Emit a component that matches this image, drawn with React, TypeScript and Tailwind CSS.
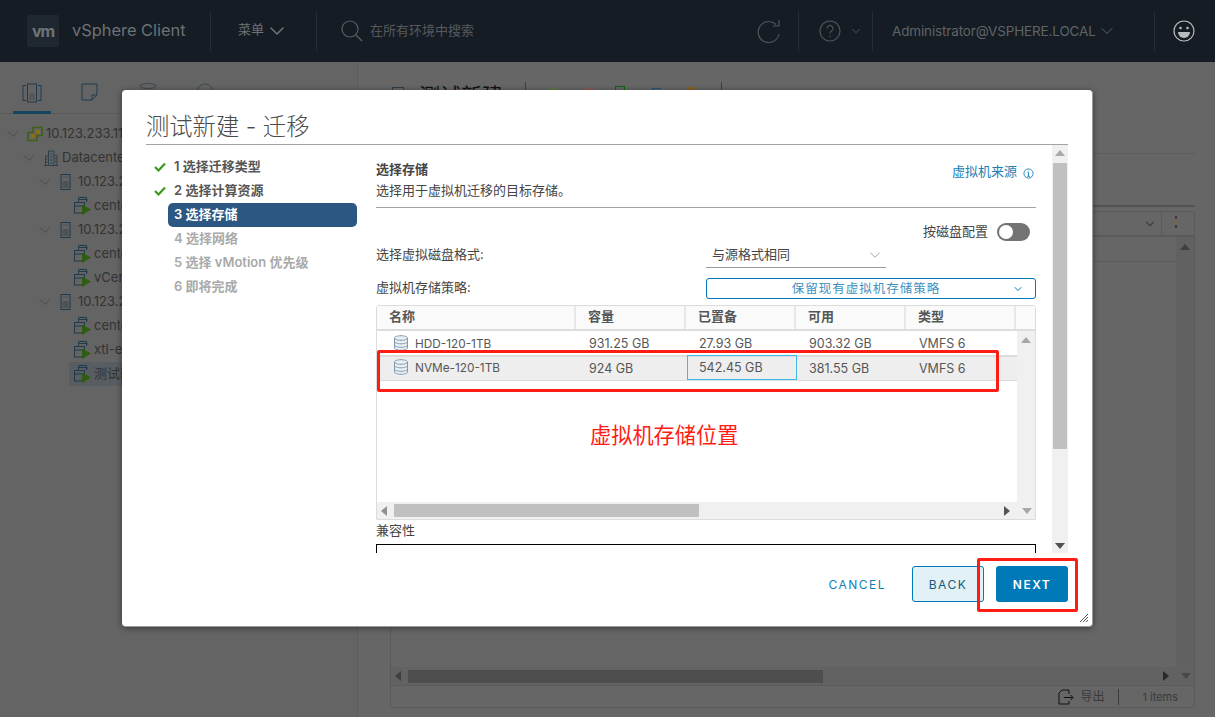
import { ChevronDown } from "lucide-react";

const font = "font-['Inter','Noto_Sans_CJK_SC',sans-serif]";

function Tri({ dir, className }: { dir: "up" | "down" | "left" | "right"; className?: string }) {
  const pts = {
    up: "0,7 5,1 10,7",
    down: "0,2 10,2 5,8",
    left: "7,0 7,10 1,5",
    right: "2,0 2,10 8,5",
  }[dir];
  return (
    <svg viewBox="0 0 10 10" className={`h-[10px] w-[10px] shrink-0 ${className ?? ""}`}>
      <polygon points={pts} fill="currentColor" />
    </svg>
  );
}

function VmIcon() {
  return (
    <svg viewBox="0 0 18 18" className="h-[18px] w-[18px] shrink-0" fill="none">
      <path d="M4.500 5V0.500h8V5M12.500 3h1.500" stroke="#1f3a4d" />
      <rect x="0.500" y="5.500" width="10" height="10.500" stroke="#1f3a4d" />
      <path d="M0.500 9h10M4.500 2.500h8" stroke="#1f3a4d" />
      <polygon points="8,7.500 17,12.500 8,18" fill="#2f5d0f" />
    </svg>
  );
}

function HostIcon() {
  return (
    <svg viewBox="0 0 12 16" className="h-[16px] w-[12px] shrink-0" fill="none">
      <rect x="1" y="0.500" width="9" height="15" stroke="#1f3a4d" />
      <rect x="2.500" y="7" width="6" height="7" fill="#4c5358" />
      <path d="M2.500 3h6" stroke="#4c5358" />
    </svg>
  );
}

function ClusterIcon() {
  return (
    <svg viewBox="0 0 16 16" className="h-[16px] w-[16px] shrink-0" fill="none">
      <path d="M1 6.500h5v-5h9v8h-5v5H1z" stroke="#3f6212" strokeWidth="1.600" />
      <rect x="4" y="8" width="4" height="4" fill="#8a6d1a" />
      <rect x="9" y="4" width="4" height="4" fill="#8a6d1a" />
    </svg>
  );
}

function DatacenterIcon() {
  return (
    <svg viewBox="0 0 16 16" className="h-[16px] w-[16px] shrink-0" fill="none" stroke="#2b3f4d">
      <path d="M1 15.500h14M2.500 15.500V6h3M5.500 15.500V1h5.500v14.500M11 5.500h3v10" />
      <path d="M7 4h2.500M7 7h2.500M7 10h2.500M7 13h2.500M3 9h1.500M3 12h1.500M12 8.500h1.500M12 11.500h1.500" />
    </svg>
  );
}

function TreeRow({
  indent,
  chevron,
  icon,
  label,
  active,
  gap,
}: {
  indent: string;
  chevron?: string;
  icon: React.ReactNode;
  label: string;
  active?: boolean;
  gap: string;
}) {
  return (
    <div className={`flex h-[24px] items-center ${indent}`}>
      {chevron && <ChevronDown className={`h-[20px] w-[20px] text-[#4a4a4a] ${chevron}`} strokeWidth={1.200} />}
      <div className={`flex h-[24px] grow items-center rounded-[3px] ${gap} ${active ? "bg-[#585d61] pl-[5px]" : ""}`}>
        {icon}
        <span className="whitespace-nowrap text-[13px] text-[#333333]">{label}</span>
      </div>
    </div>
  );
}

function Step({ n, state }: { n: string; state: "done" | "active" | "todo" }) {
  const text =
    state === "done" ? "text-[#565656]" : state === "active" ? "bg-[#2d5783] text-white" : "text-[#a9a9a9]";
  return (
    <div className="flex h-[24px] items-center">
      <div className="w-[22px] pl-[8px]">
        {state === "done" && (
          <svg viewBox="0 0 12 10" className="h-[10px] w-[12px]">
            <path d="M1 5l3.500 3.500L11 1.500" fill="none" stroke="#3c9a1f" strokeWidth="2.200" />
          </svg>
        )}
      </div>
      <div className={`flex h-[24px] w-[189px] items-center rounded-[5px] pl-[6px] text-[13px] font-semibold ${text}`}>{n}</div>
    </div>
  );
}

function DbIcon() {
  return (
    <svg viewBox="0 0 16 16" className="h-[16px] w-[16px] shrink-0" fill="#e9eff3" stroke="#7f9bb0">
      <path d="M1.500 3c0-1.200 2.900-2.300 6.500-2.300s6.500 1.100 6.500 2.300v10c0 1.200-2.900 2.300-6.500 2.300s-6.500-1.100-6.500-2.300z" />
      <path d="M1.500 3c0 1.200 2.900 2.300 6.500 2.300s6.500-1.100 6.500-2.300M1.500 6.500c0 1.200 2.900 2.300 6.500 2.300s6.500-1.100 6.500-2.300M1.500 10c0 1.200 2.900 2.300 6.500 2.300s6.500-1.100 6.500-2.300" fill="none" />
    </svg>
  );
}

const cols = "grid grid-cols-[199px_110px_110px_110px_110px]";

function DataRow({ name, cap, prov, free, selected }: { name: string; cap: string; prov: string; free: string; selected?: boolean }) {
  return (
    <div className={`${cols} items-center text-[12.500px] text-[#565656] ${selected ? "h-[26px] border-t-2 border-b border-[#dcdcdc] bg-[#eeeeee] pt-px" : "h-[24px] pt-[3px]"}`}>
      <div className="flex items-center gap-[6px] pl-[16px]">
        <span className="-mt-[4px]">
          <DbIcon />
        </span>
        <span className="text-[11.800px]">{name}</span>
      </div>
      <div className="pl-[13px]">{cap}</div>
      <div className={selected ? "-mr-px ml-px -mt-[3px] flex h-[25px] items-center border border-[#3fb8ea] pl-[11px] pt-[2px]" : "pl-[13px]"}>{prov}</div>
      <div className="pl-[13px]">{free}</div>
      <div className="pl-[13px]">VMFS 6</div>
    </div>
  );
}

function StorageTable() {
  const heads = ["名称", "容量", "已置备", "可用", "类型"];
  return (
    <div className="mt-[6px] flex h-[215px] flex-col rounded-t-[3px] border border-[#dcdcdc]">
      <div className="flex h-[25px] shrink-0 border-b-2 border-[#dcdcdc] bg-[#fafafa] text-[13px] font-semibold text-[#565656]">
        {heads.map((h, i) => (
          <div key={h} className={`flex items-center border-r-2 border-[#e8e8e8] pb-[2px] ${i === 0 ? "w-[199px] pl-[12px]" : "w-[110px] pl-[12px]"}`}>
            {h}
          </div>
        ))}
      </div>
      <div className="flex min-h-0 flex-1">
        <div className="w-[641px]">
          <DataRow name="HDD-120-1TB" cap="931.25 GB" prov="27.93 GB" free="903.32 GB" />
          <DataRow name="NVMe-120-1TB" cap="924 GB" prov="542.45 GB" free="381.55 GB" selected />
        </div>
        <div className="flex w-[18px] justify-center bg-[#f0f0f0] pt-[5px]">
          <Tri dir="up" className="text-[#a8a8a8]" />
        </div>
      </div>
      <div className="flex h-[17px] shrink-0 items-center bg-[#f0f0f0]">
        <Tri dir="left" className="ml-[3px] text-[#909090]" />
        <div className="ml-[4px] h-[13px] w-[305px] bg-[#c0c0c0]" />
        <div className="grow" />
        <Tri dir="right" className="text-[#555555]" />
        <Tri dir="down" className="ml-[10px] mr-[3px] text-[#a8a8a8]" />
      </div>
    </div>
  );
}

function Wizard() {
  return (
    <div className="absolute left-[122px] top-[90px] flex h-[537px] w-[971px] flex-col rounded-[4px] border-r border-b border-[#9a9a9a] bg-white px-[24px] shadow-[0_1px_6px_rgba(0,0,0,0.45)]">
      <div className="flex h-[55px] shrink-0 items-center border-b border-[#a3a3a3] pt-[20px] text-[23.300px] font-light text-[#4a4a4a]">
        测试新建 - 迁移
      </div>
      <div className="flex h-[408px] shrink-0">
        <div className="w-[230px] pt-[10px]">
          <Step n="1 选择迁移类型" state="done" />
          <Step n="2 选择计算资源" state="done" />
          <Step n="3 选择存储" state="active" />
          <Step n="4 选择网络" state="todo" />
          <Step n="5 选择 vMotion 优先级" state="todo" />
          <Step n="6 即将完成" state="todo" />
        </div>
        <div className="w-[660px] overflow-hidden text-[13px] text-[#454545]">
          <div className="flex h-[63px] justify-between border-b border-[#a3a3a3] pt-[15px]">
            <div>
              <div className="h-[21px] font-semibold">选择存储</div>
              <div>选择用于虚拟机迁移的目标存储。</div>
            </div>
            <div className="flex h-[24px] items-center gap-[6px] text-[#1c7fb6]">
              虚拟机来源
              <svg viewBox="0 0 12 12" className="mr-[2px] mt-[2px] h-[11px] w-[11px]" fill="none" stroke="#1c7fb6">
                <circle cx="6" cy="6" r="5" />
                <path d="M6 5v4M4.500 9h3M5 5h1M6 3v.800" />
              </svg>
            </div>
          </div>
          <div className="mt-[15px] flex h-[18px] items-center justify-end">
            按磁盘配置
            <div className="ml-[9px] mr-[6px] flex h-[18px] w-[33px] items-center rounded-full bg-[#737373] pl-[2px]">
              <div className="h-[14px] w-[14px] rounded-full bg-white" />
            </div>
          </div>
          <div className="mt-[3px] flex h-[24px] items-center">
            <div className="w-[330px] pb-[2px]">选择虚拟磁盘格式:</div>
            <div className="flex h-[24px] w-[180px] items-center justify-between border-b border-[#9a9a9a] pb-[2px] pl-[6px] pr-[2px]">
              与源格式相同
              <ChevronDown className="h-[18px] w-[18px] text-[#9a9a9a]" strokeWidth={1.200} />
            </div>
          </div>
          <div className="mt-[10px] flex h-[21px] items-center">
            <div className="w-[330px] pb-[2px]">虚拟机存储策略:</div>
            <div className="relative flex h-[21px] w-[330px] items-center justify-center rounded-[3px] border border-[#0079b8] pr-[10px] pt-px text-[12.500px] tracking-[1px] text-[#3f8fbd]">
              保留现有虚拟机存储策略
              <ChevronDown className="absolute right-[11px] h-[12px] w-[12px] text-[#0079b8]" strokeWidth={2} />
            </div>
          </div>
          <StorageTable />
          <div className="mt-px h-[19px]">兼容性</div>
          <div className="mt-[4px] h-[40px] border border-black" />
        </div>
        <div className="ml-[16px] flex w-[16px] flex-col items-center bg-[#f0f0f0]">
          <Tri dir="up" className="my-[4px] text-[#a8a8a8]" />
          <div className="h-[286px] w-[14px] bg-[#c0c0c0]" />
          <div className="grow" />
          <Tri dir="down" className="mb-[2px] text-[#505050]" />
        </div>
      </div>
      <div className="flex justify-end pt-[13px] text-[12px] tracking-[1.500px]">
        <div className="mr-[26px] flex h-[36px] items-center pt-[2px] font-normal text-[#0f7fb8]">CANCEL</div>
        <div className="mr-[12px] flex h-[36px] w-[72px] items-center justify-center rounded-[3px] border border-[#0079b8] bg-[#e1f1f6] pt-[2px] font-normal text-[#17587c]">
          BACK
        </div>
        <div className="flex h-[36px] w-[72px] items-center justify-center rounded-[3px] bg-[#0079b8] pt-[2px] font-semibold text-white">NEXT</div>
      </div>
      <svg viewBox="0 0 8 8" className="absolute bottom-[4px] right-[4px] h-[8px] w-[8px]" stroke="#555555">
        <path d="M0 8L8 0M3 8L8 3M6 8L8 6" />
      </svg>
    </div>
  );
}

export default function App() {
  const divider = "h-[40px] w-px bg-[#262d34]";
  return (
    <div className={`relative flex h-[717px] w-[1215px] flex-col overflow-hidden bg-[#666666] ${font}`}>
      <header className="flex h-[62px] shrink-0 items-center bg-[#151c24] text-[#6d7275]">
        <div className="ml-[27px] flex h-[32px] w-[32px] items-center justify-center rounded-[2px] bg-[#1f2831] text-[16px] font-bold tracking-[-1px] text-[#6f7477]">
          vm
        </div>
        <div className="ml-[13px] w-[138px] pb-[2px] text-[16.400px]">vSphere Client</div>
        <div className={divider} />
        <div className="ml-[27px] flex w-[78px] items-center gap-px text-[13px]">
          <span className="pb-[2px]">菜单</span>
          <ChevronDown className="h-[24px] w-[24px]" strokeWidth={1.600} />
        </div>
        <div className={divider} />
        <svg viewBox="0 0 22 22" className="ml-[24px] h-[22px] w-[22px]" fill="none" stroke="#5a5f63" strokeWidth="1.200">
          <circle cx="9" cy="9" r="8" />
          <path d="M15 15l6 6" />
        </svg>
        <div className="ml-[7px] text-[13px] text-[#565a5d]">在所有环境中搜索</div>
        <div className="grow" />
        <svg viewBox="0 0 24 24" className="h-[24px] w-[24px]" fill="none" stroke="#4f5458" strokeWidth="1.200">
          <path d="M19 5.500A10.500 10.500 0 1 0 22 15" />
          <path d="M22 1v6h-6" />
        </svg>
        <div className={`ml-[17px] ${divider}`} />
        <svg viewBox="0 0 22 22" className="ml-[20px] h-[22px] w-[22px]" fill="none" stroke="#4f5458" strokeWidth="1.200">
          <circle cx="11" cy="11" r="10" />
          <path d="M8 8.500a3 3 0 1 1 4.500 2.600c-1 .6-1.500 1.200-1.500 2.400M11 15.500v1.500" />
        </svg>
        <ChevronDown className="ml-[8px] h-[14px] w-[14px] text-[#54595c]" strokeWidth={1.500} />
        <div className={`ml-[9px] ${divider}`} />
        <div className="ml-[19px] w-[202px] whitespace-nowrap text-[13.500px] tracking-[-0.15px] text-[#5f6467]">Administrator@VSPHERE.LOCAL</div>
        <ChevronDown className="ml-[3px] h-[20px] w-[20px] text-[#5f6467]" strokeWidth={1.200} />
        <div className={`ml-[37px] ${divider}`} />
        <svg viewBox="0 0 22 22" className="ml-[18px] mr-[20px] h-[22px] w-[22px]" fill="none" stroke="#b9bcbe" strokeWidth="1.200">
          <circle cx="11" cy="11" r="10" />
          <circle cx="7.500" cy="8" r="1.300" fill="#b9bcbe" stroke="none" />
          <circle cx="14.500" cy="8" r="1.300" fill="#b9bcbe" stroke="none" />
          <path d="M5 12h12a6 6 0 0 1-12 0z" fill="#b9bcbe" stroke="none" />
        </svg>
      </header>

      <div className="flex min-h-0 flex-1">
        <aside className="w-[358px] shrink-0 border-r border-[#5c5c5c] bg-[#646464]">
          <div className="flex h-[52px] border-b border-[#5a5a5a] pt-[21px]">
            <div className="ml-[13px] flex h-[31px] w-[38px] justify-center border-b-[3px] border-[#16455f]">
              <svg viewBox="0 0 20 20" className="h-[20px] w-[20px]" fill="none" stroke="#1f3a4d">
                <path d="M4 2.500H1v15h3M16 2.500h3v15h-3" />
                <rect x="5.500" y="1" width="9" height="18" />
                <rect x="7" y="10" width="6" height="7" fill="#55595c" stroke="none" />
              </svg>
            </div>
            <svg viewBox="0 0 18 18" className="ml-[30px] h-[18px] w-[18px]" fill="none" stroke="#1f3a4d">
              <path d="M1 1h15v11l-5 5H1zM11 17v-5h5" />
            </svg>
            <svg viewBox="0 0 18 18" className="ml-[40px] h-[18px] w-[18px]" fill="none" stroke="#3a4a55">
              <ellipse cx="9" cy="3" rx="8" ry="2.500" />
            </svg>
            <svg viewBox="0 0 18 18" className="ml-[39px] h-[18px] w-[18px]" fill="none" stroke="#3a4a55">
              <circle cx="9" cy="9" r="8" />
            </svg>
          </div>
          <div className="pt-[8px]">
            <TreeRow indent="pl-[3px]" chevron="mr-[4px]" gap="gap-[3px]" icon={<ClusterIcon />} label="10.123.233.118" />
            <TreeRow indent="pl-[19px]" chevron="mr-[4px]" gap="gap-[3px]" icon={<DatacenterIcon />} label="Datacenter" />
            <TreeRow indent="pl-[35px]" chevron="mr-[5px]" gap="gap-[6px]" icon={<HostIcon />} label="10.123.233.21" />
            <TreeRow indent="pl-[74px]" gap="gap-[2px]" icon={<VmIcon />} label="centos7" />
            <TreeRow indent="pl-[35px]" chevron="mr-[5px]" gap="gap-[6px]" icon={<HostIcon />} label="10.123.233.22" />
            <TreeRow indent="pl-[74px]" gap="gap-[2px]" icon={<VmIcon />} label="centos7" />
            <TreeRow indent="pl-[74px]" gap="gap-[2px]" icon={<VmIcon />} label="vCenter" />
            <TreeRow indent="pl-[35px]" chevron="mr-[5px]" gap="gap-[6px]" icon={<HostIcon />} label="10.123.233.23" />
            <TreeRow indent="pl-[74px]" gap="gap-[2px]" icon={<VmIcon />} label="centos7" />
            <TreeRow indent="pl-[74px]" gap="gap-[2px]" icon={<VmIcon />} label="xtl-esxi" />
            <TreeRow indent="pl-[69px]" active gap="gap-[2px]" icon={<VmIcon />} label="测试新建" />
          </div>
        </aside>
        <main className="flex min-w-0 flex-1 flex-col pl-[32px] pr-[20px]">
          <div className="flex h-[92px] items-start border-b border-[#5c5c5c] pt-[20px]">
            <div className="ml-[2px] mt-[5px] h-[14px] w-[12px] border border-[#2c3e4c]" />
            <div className="ml-[15px] w-[106px] text-[21px] leading-[28px] text-[#111111]">测试新建</div>
            <div className="h-[24px] w-px bg-[#3f3f3f]" />
            <div className="ml-[24px] mt-[6px] h-[8px] w-[8px] bg-[#5c7a4a]" />
            <div className="ml-[26px] mt-[6px] h-[8px] w-[10px] bg-[#8a5a5a]" />
            <div className="ml-[21px] mt-[4px] h-[8px] w-[10px] border border-[#0c6a10]" />
            <div className="ml-[27px] mt-[6px] h-[8px] w-[9px] border border-[#24527a]" />
            <div className="ml-[26px] mt-[5px] h-[8px] w-[8px] bg-[#8a5f24]" />
            <div className="ml-[26px] h-[24px] w-px bg-[#3f3f3f]" />
          </div>
          <div className="mt-[51px] border-t-2 border-[#525252] pt-[4px]" />
          <div className="flex h-[497px] flex-col rounded-[3px] border border-[#5a5a5a]">
            <div className="flex h-[25px] shrink-0 items-center justify-end border-b-2 border-[#5a5a5a] text-[#3f3f3f]">
              <ChevronDown className="mr-[4px] h-[14px] w-[14px]" />
              <div className="flex h-[23px] w-[33px] justify-center border-l border-[#5a5a5a] pr-[4px] pt-[4px]">
                <div className="h-[12px] w-[2px] border-y-[3px] border-[#3a3a3a] bg-[#7a6540]" />
              </div>
            </div>
            <div className="flex min-h-0 flex-1">
              <div className="grow">
                <div className="h-[25px] border-b border-[#5c5c5c]" />
              </div>
              <div className="flex w-[18px] justify-center bg-[#616161] pt-[6px]">
                <Tri dir="up" className="text-[#3f3f3f]" />
              </div>
            </div>
            <div className="flex h-[18px] shrink-0 items-center bg-[#626262]">
              <Tri dir="left" className="ml-[3px] text-[#3f3f3f]" />
              <div className="ml-[4px] h-[13px] w-[415px] bg-[#4e4e4e]" />
              <div className="grow" />
              <Tri dir="right" className="text-[#2a2a2a]" />
              <Tri dir="down" className="ml-[10px] mr-[3px] text-[#484848]" />
            </div>
            <div className="flex h-[22px] shrink-0 items-center justify-end border-t border-[#5a5a5a] pr-[16px] pt-px text-[#3a3a3a]">
              <svg viewBox="0 0 16 16" className="mr-[6px] h-[16px] w-[16px]" fill="none" stroke="#111111">
                <path d="M11 5V1H4L1 4v11h10v-3M6 8.500h9M12.500 6l2.500 2.500L12.500 11" />
              </svg>
              <span className="text-[12px]">导出</span>
              <div className="ml-[14px] mr-[23px] h-[16px] w-px bg-[#3a3a3a]" />
              <span className="text-[11px]">1 items</span>
            </div>
          </div>
        </main>
      </div>

      <Wizard />

      <div className="absolute left-[377px] top-[350px] h-[42px] w-[622px] rounded-[2px] border-3 border-[#ff1c14]" />
      <div className="absolute left-[590px] top-[421px] text-[21.200px] leading-[28px] text-[#ff1c14]">虚拟机存储位置</div>
      <div className="absolute left-[977px] top-[558px] h-[54px] w-[101px] rounded-[2px] border-3 border-[#ff1c14]" />
    </div>
  );
}
